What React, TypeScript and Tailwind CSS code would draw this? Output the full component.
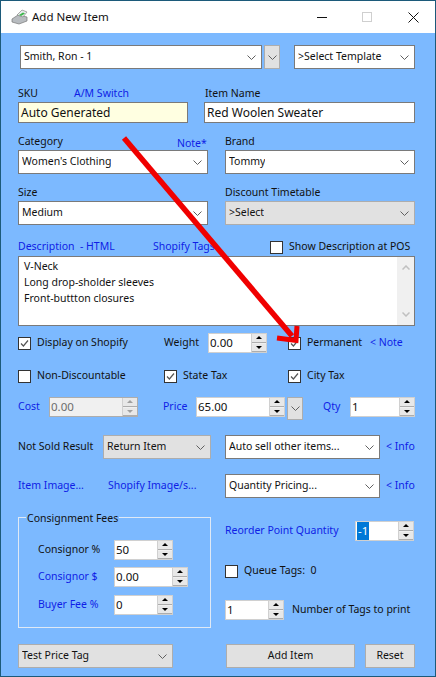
import React from "react";

const font = "font-['Noto_Sans','DejaVu_Sans',sans-serif]";

function Chevron() {
    return (
        <svg width="9" height="5" viewBox="0 0 9 5" className="shrink-0">
            <path d="M0.5 0.5 L4.5 4.5 L8.5 0.5" fill="none" stroke="#606060" strokeWidth="1" />
        </svg>
    );
}

function Select({ text, w, gray = false, h = "h-6" }: { text: string; w: string; gray?: boolean; h?: string }) {
    return (
        <div
            className={`${w} ${h} flex items-center justify-between pl-[3px] pr-[5px] border ${
                gray ? "bg-[#e1e1e1] border-[#adadad]" : "bg-white border-[#7a7a7a]"
            }`}
        >
            <span className="truncate">{text}</span>
            <Chevron />
        </div>
    );
}

function DropBtn({ className }: { className: string }) {
    return (
        <div className={`${className} flex items-center justify-center bg-[#e1e1e1] border border-[#adadad]`}>
            <Chevron />
        </div>
    );
}

function TextBox({ text, w, bg = "bg-white" }: { text: string; w: string; bg?: string }) {
    return (
        <div className={`${w} h-[21px] ${bg} border border-[#7a7a7a] flex items-center pl-[2px] text-[12px]`}>
            {text}
        </div>
    );
}

function Spin({ text, w, disabled = false, selected = false }: { text: string; w: string; disabled?: boolean; selected?: boolean }) {
    return (
        <div
            className={`${w} h-5 border flex items-stretch justify-between ${
                disabled ? "bg-[#f0f0f0] border-[#adadad] text-[#6d6d6d]" : "bg-white border-[#d0d0d0]"
            }`}
        >
            <span className="pl-[1px] flex items-center text-[11.5px]">
                {selected ? <span className="bg-[#0078d7] text-white px-[1px]">{text}</span> : text}
            </span>
            <div className="w-[15px] flex flex-col gap-px border-l border-[#d0d0d0] bg-[#f0f0f0]">
                <div className="flex-1 flex items-center justify-center border-b border-[#adadad] bg-[#e8e8e8]">
                    <div className={`w-0 h-0 border-x-[3px] border-x-transparent border-b-[3px] ${disabled ? "border-b-[#a0a0a0]" : "border-b-black"}`} />
                </div>
                <div className="flex-1 flex items-center justify-center border-b border-[#adadad] bg-[#e8e8e8]">
                    <div className={`w-0 h-0 border-x-[3px] border-x-transparent border-t-[3px] ${disabled ? "border-t-[#a0a0a0]" : "border-t-black"}`} />
                </div>
            </div>
        </div>
    );
}

function Check({ checked = false, label }: { checked?: boolean; label: string }) {
    return (
        <div className="flex items-center gap-[6px]">
            <div className="w-[13px] h-[13px] bg-white border border-[#333] flex items-center justify-center">
                {checked && (
                    <svg width="9" height="9" viewBox="0 0 9 9">
                        <path d="M1 4.5 L3.4 7 L8 1.5" fill="none" stroke="#555" strokeWidth="1.2" />
                    </svg>
                )}
            </div>
            <span>{label}</span>
        </div>
    );
}

function Blue({ children, className = "" }: { children: React.ReactNode; className?: string }) {
    return <span className={`text-[#0f1ee6] ${className}`}>{children}</span>;
}

export default function App() {
    return (
        <div className={`${font} relative w-[436px] h-[677px] text-[10.5px] whitespace-nowrap text-[#111] bg-[#7cb9ff] border border-[#1c5a7a] overflow-hidden`}>
            {/* title bar */}
            <div className="h-[32px] bg-white flex items-center">
                <svg width="18" height="16" viewBox="0 0 18 16" className="ml-[10px]">
                    <path d="M1 10 L7 6 L16 8 L16 12 L8 15 L1 13 Z" fill="#b8bcc0" stroke="#777" strokeWidth="0.7" />
                    <path d="M6 6 L11 1 L16 3 L12 8 Z" fill="#e8ecec" stroke="#888" strokeWidth="0.7" />
                    <path d="M8 6 L12 3.5 L14 4.5 L10 7 Z" fill="#3bb54a" />
                </svg>
                <span className="ml-[3px] text-[11.5px]">Add New Item</span>
                <div className="ml-auto flex items-center">
                    <div className="w-[10px] h-px bg-[#111] mr-[35px]" />
                    <div className="w-[10px] h-[10px] border border-[#cfcfcf] mr-[36px]" />
                    <svg width="11" height="11" viewBox="0 0 11 11" className="mr-[16px]">
                        <path d="M0.5 0.5 L10.5 10.5 M10.5 0.5 L0.5 10.5" stroke="#111" strokeWidth="1" />
                    </svg>
                </div>
            </div>

            <div className="pl-[17px] w-[414px]">
                {/* customer */}
                <div className="mt-[12px] ml-[2px] flex items-center">
                    <Select text="Smith, Ron - 1" w="w-[244px]" />
                    <DropBtn className="w-4 h-6 ml-[2px]" />
                    <div className="ml-[14px]">
                        <Select text=">Select Template" w="w-[121px]" />
                    </div>
                </div>

                {/* sku / name */}
                <div className="mt-[17px] flex h-[16px] items-center">
                    <span className="w-[56px]">SKU</span>
                    <Blue className="w-[131px]">A/M Switch</Blue>
                    <span>Item Name</span>
                </div>
                <div className="flex gap-4">
                    <TextBox text="Auto Generated" w="w-[170px]" bg="bg-[#ffffe1]" />
                    <TextBox text="Red Woolen Sweater" w="w-[211px]" />
                </div>

                {/* category / brand */}
                <div className="mt-[11px] flex h-[16px] items-center">
                    <span className="w-[159px]">Category</span>
                    <Blue className="w-[48px] pt-[3px]">Note*</Blue>
                    <span>Brand</span>
                </div>
                <div className="flex gap-[17px]">
                    <Select text="Women's Clothing" w="w-[190px]" />
                    <Select text="Tommy" w="w-[190px]" />
                </div>

                {/* size / discount */}
                <div className="mt-[11px] flex h-[16px] items-center">
                    <span className="w-[207px]">Size</span>
                    <span>Discount Timetable</span>
                </div>
                <div className="flex gap-[17px]">
                    <Select text="Medium" w="w-[190px]" />
                    <Select text=">Select" w="w-[190px]" gray />
                </div>

                {/* description */}
                <div className="mt-[14px] flex h-[16px] items-center">
                    <Blue className="w-[135px]">Description&nbsp; - HTML</Blue>
                    <Blue className="w-[117px]">Shopify Tags</Blue>
                    <Check label="Show Description at POS" />
                </div>
                <div className="mt-[1px] w-[397px] h-[70px] bg-white border border-[#7a7a7a] flex justify-between">
                    <div className="pl-[5px] pt-[1px] leading-[16px]">
                        <div>V-Neck</div>
                        <div>Long drop-sholder sleeves</div>
                        <div>Front-buttton closures</div>
                    </div>
                    <div className="w-[17px] bg-[#f0f0f0] flex flex-col items-center justify-between py-[8px]">
                        <svg width="8" height="5" viewBox="0 0 8 5">
                            <path d="M0.5 4.5 L4 1 L7.5 4.5" fill="none" stroke="#c0c0c0" strokeWidth="1.5" />
                        </svg>
                        <svg width="8" height="5" viewBox="0 0 8 5">
                            <path d="M0.5 0.5 L4 4 L7.5 0.5" fill="none" stroke="#c0c0c0" strokeWidth="1.5" />
                        </svg>
                    </div>
                </div>

                {/* checks */}
                <div className="mt-[7px] flex items-center h-[20px]">
                    <div className="w-[146px]"><Check checked label="Display on Shopify" /></div>
                    <span className="w-[44px]">Weight</span>
                    <Spin text="0.00" w="w-[59px]" />
                    <div className="ml-[21px] w-[80px]"><Check checked label="Permanent" /></div>
                    <Blue className="ml-[2px]">&lt; Note</Blue>
                </div>
                <div className="mt-[13px] flex items-center h-[20px]">
                    <div className="w-[146px]"><Check label="Non-Discountable" /></div>
                    <div className="w-[124px]"><Check checked label="State Tax" /></div>
                    <Check checked label="City Tax" />
                </div>

                {/* cost / price / qty */}
                <div className="mt-[9px] flex items-center h-[24px]">
                    <Blue className="w-[31px]">Cost</Blue>
                    <Spin text="0.00" w="w-[89px]" disabled />
                    <Blue className="ml-[25px] w-[33px]">Price</Blue>
                    <Spin text="65.00" w="w-[89px]" />
                    <DropBtn className="w-4 h-[23px] ml-[2px] mt-[3px]" />
                    <Blue className="ml-[20px] w-[27px]">Qty</Blue>
                    <Spin text="1" w="w-[65px]" />
                </div>

                {/* not sold */}
                <div className="mt-[16px] flex items-center h-[24px]">
                    <span className="w-[85px]">Not Sold Result</span>
                    <Select text="Return Item" w="w-[108px]" gray />
                    <div className="ml-[14px]">
                        <Select text="Auto sell other items..." w="w-[155px]" />
                    </div>
                    <Blue className="ml-[6px]">&lt; Info</Blue>
                </div>
                <div className="mt-[15px] flex items-center h-[24px]">
                    <Blue className="w-[90px]">Item Image...</Blue>
                    <Blue className="w-[117px]">Shopify Image/s...</Blue>
                    <Select text="Quantity Pricing..." w="w-[155px]" />
                    <Blue className="ml-[6px]">&lt; Info</Blue>
                </div>

                {/* fees + tags */}
                <div className="mt-[19px] flex">
                    <div className="relative w-[193px] h-[111px] border border-[#dfe9f5] pl-[19px] pt-[22px]">
                        <span className="absolute left-[7px] top-[-7px] bg-[#7cb9ff] px-px">Consignment Fees</span>
                        <div className="flex items-center h-[20px]">
                            <span className="w-[76px]">Consignor %</span>
                            <Spin text="50" w="w-[59px]" />
                        </div>
                        <div className="mt-[7px] flex items-center h-[20px]">
                            <Blue className="w-[76px]">Consignor $</Blue>
                            <Spin text="0.00" w="w-[74px]" />
                        </div>
                        <div className="mt-[8px] flex items-center h-[20px]">
                            <Blue className="w-[76px]">Buyer Fee %</Blue>
                            <Spin text="0" w="w-[59px]" />
                        </div>
                    </div>
                    <div className="ml-[14px] mt-[4px]">
                        <div className="flex items-center h-[20px]">
                            <Blue className="w-[130px]">Reorder Point Quantity</Blue>
                            <Spin text="-1" w="w-[59px]" selected />
                        </div>
                        <div className="mt-[20px] flex items-center h-[20px]">
                            <Check label={"Queue Tags:\u00a0\u00a00"} />
                        </div>
                        <div className="mt-[19px] flex items-center h-[20px]">
                            <Spin text="1" w="w-[59px]" />
                            <span className="ml-[8px]">Number of Tags to print</span>
                        </div>
                    </div>
                </div>

                {/* bottom */}
                <div className="mt-[16px] flex items-center">
                    <Select text="Test Price Tag" w="w-[155px]" gray />
                    <div className="ml-[53px] w-[129px] h-[24px] bg-[#e1e1e1] border border-[#adadad] flex items-center justify-center">Add Item</div>
                    <div className="ml-[10px] w-[50px] h-[24px] bg-[#e1e1e1] border border-[#adadad] flex items-center justify-center">Reset</div>
                </div>
            </div>

            {/* red annotation arrow */}
            <svg width="436" height="677" viewBox="0 0 436 677" className="absolute left-[-1px] top-[-1px] pointer-events-none">
                <path d="M124 138 L292 336" stroke="#f00000" strokeWidth="5.5" fill="none" />
                <path d="M277 338 L296 340.5 L297 326" stroke="#f00000" strokeWidth="5" fill="none" />
            </svg>
        </div>
    );
}
